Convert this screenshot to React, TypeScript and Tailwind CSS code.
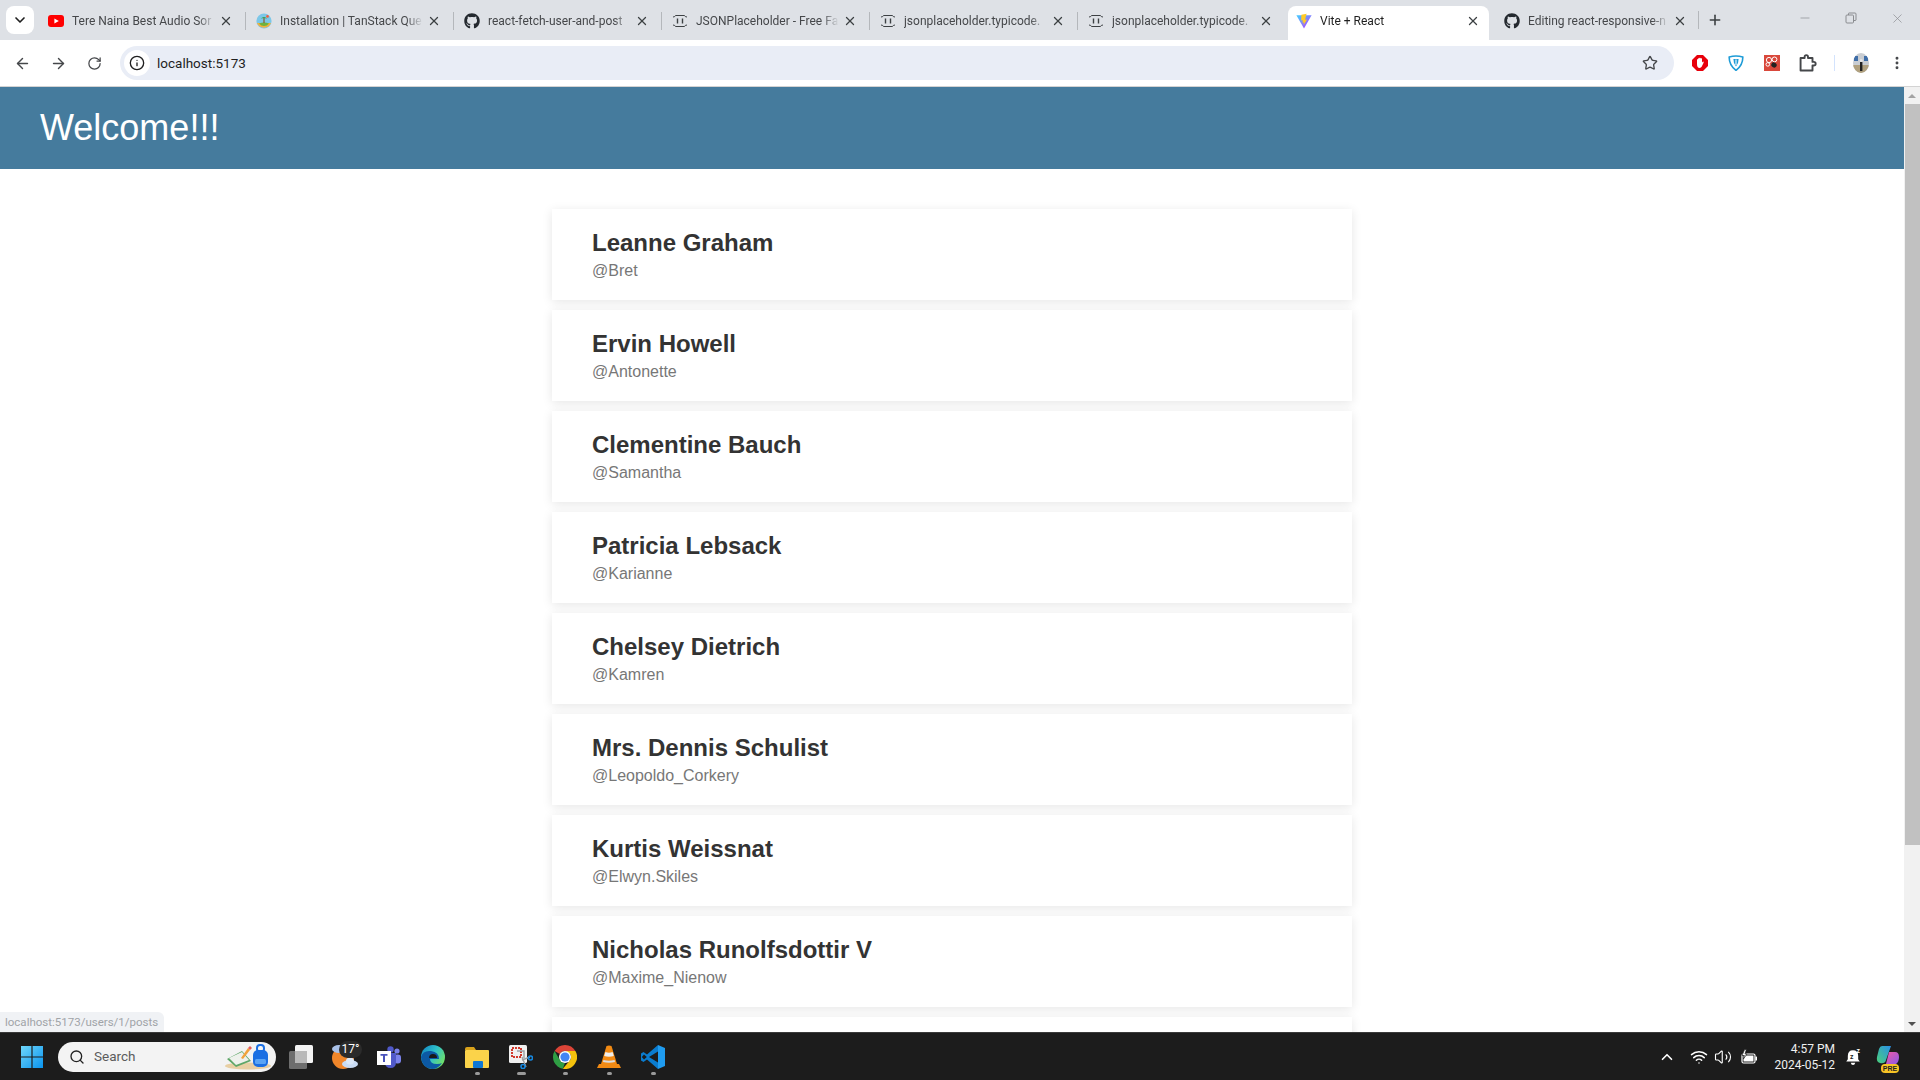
import React from 'react';
import {
  ArrowLeft,
  ArrowRight,
  ChevronDown,
  ChevronUp,
  Info,
  Minus,
  MoreVertical,
  Plus,
  RotateCw,
  Search,
  Star,
  Volume2,
  Wifi,
  X,
} from 'lucide-react';
import { FaGithub } from 'react-icons/fa';

const users = [
  { name: 'Leanne Graham', username: 'Bret' },
  { name: 'Ervin Howell', username: 'Antonette' },
  { name: 'Clementine Bauch', username: 'Samantha' },
  { name: 'Patricia Lebsack', username: 'Karianne' },
  { name: 'Chelsey Dietrich', username: 'Kamren' },
  { name: 'Mrs. Dennis Schulist', username: 'Leopoldo_Corkery' },
  { name: 'Kurtis Weissnat', username: 'Elwyn.Skiles' },
  { name: 'Nicholas Runolfsdottir V', username: 'Maxime_Nienow' },
  { name: 'Glenna Reichert', username: 'Delphine' },
  { name: 'Clementina DuBuque', username: 'Moriah.Stanton' },
];

const YoutubeFavicon = () => (
  <svg viewBox="0 0 16 16" className="w-4 h-4 shrink-0">
    <rect x="0" y="2" width="16" height="12" rx="3" fill="#ff0000" />
    <path d="M6.4 5.4 L10.8 8 L6.4 10.6 Z" fill="#fff" />
  </svg>
);

const IslandFavicon = () => (
  <svg viewBox="0 0 16 16" className="w-4 h-4 shrink-0">
    <circle cx="8" cy="8" r="7.6" fill="#7cc7e8" />
    <path d="M1 10 A7.6 7.6 0 0 0 15 10 Z" fill="#f4b13d" />
    <path d="M3 10.5 Q8 8.5 13 10.5 Q11 13 8 13 Q5 13 3 10.5Z" fill="#6db33f" />
    <path d="M8 10 L8 5" stroke="#8a5a2b" strokeWidth="1.2" />
    <path d="M4.8 5.6 Q8 2.2 11.2 5.6 Q8 4.4 4.8 5.6Z" fill="#2f9e44" />
    <circle cx="11.5" cy="3.4" r="1.3" fill="#f25c3b" />
  </svg>
);

const JsonFavicon = () => (
  <svg viewBox="0 0 16 16" className="w-4 h-4 shrink-0" fill="none" stroke="#3c4043" strokeWidth="1">
    <path d="M1 4 Q3 4 3.5 2.5 L12.5 2.5 Q13 4 15 4" />
    <path d="M1 12 Q3 12 3.5 13.5 L12.5 13.5 Q13 12 15 12" />
    <path d="M5.5 5.5 V10.5 M10.5 5.5 V10.5" strokeWidth="1.4" />
  </svg>
);

const ViteFavicon = () => (
  <svg viewBox="0 0 16 16" className="w-4 h-4 shrink-0">
    <defs>
      <linearGradient id="viteBody" x1="0" y1="0" x2="1" y2="1">
        <stop offset="0" stopColor="#41d1ff" />
        <stop offset="1" stopColor="#bd34fe" />
      </linearGradient>
    </defs>
    <path d="M0.4 2.2 L15.6 2.2 L8 15.4 Z" fill="url(#viteBody)" />
    <path d="M10.6 0.8 L5.4 1.8 L5.1 7.6 L6.9 7.2 L6.4 9.8 L7.9 9.4 L7.5 12.2 L11 6.4 L9.1 6.8 L9.6 4.4 Z" fill="#ffca28" />
  </svg>
);

type TabProps = {
  title: string;
  icon: React.ReactNode;
  variant?: 'normal' | 'active' | 'last';
  separator?: boolean;
};

const tabVariants = {
  normal: 'w-[205px] text-[#45474a] pr-3',
  active: 'w-[201px] bg-white rounded-t-lg text-[#1f1f1f] pr-[9px]',
  last: 'w-full text-[#45474a] pr-[11px]',
};

const Tab = ({ title, icon, variant = 'normal', separator }: TabProps) => (
  <div className={`h-[34px] shrink-0 flex items-center ${variant === 'last' ? 'w-[202px]' : 'w-[208px]'}`}>
    <div className={`h-full flex items-center pl-2 pb-1 ${tabVariants[variant]}`}>
      {icon}
      <span className="ml-2 mr-1 flex-1 min-w-0 whitespace-nowrap overflow-hidden text-xs [mask-image:linear-gradient(to_right,black_88%,transparent)]">
        {title}
      </span>
      <X className="w-3.5 h-3.5 shrink-0 text-[#3c4043]" strokeWidth={2.2} />
    </div>
    {separator && <div className="w-px h-[18px] mb-1 bg-[#b4b7bb]" />}
  </div>
);

const StopExtension = () => (
  <svg viewBox="0 0 16 16" className="w-4 h-4">
    <path d="M5 0 H11 L16 5 V11 L11 16 H5 L0 11 V5 Z" fill="#e8000b" />
    <path d="M5 9 V5 Q5 4 6 4 V7 V3.5 Q6.5 2.8 7.2 3.5 V7 V3 Q8 2.4 8.6 3 V7 V3.6 Q9.4 3 10 3.6 V7.5 L11 6.6 Q12 6.6 11.6 7.8 L9.8 11.6 Q9.2 13 7.6 13 Q5 13 5 9Z" fill="#fff" />
  </svg>
);

const ShieldExtension = () => (
  <svg viewBox="0 0 16 16" className="w-4 h-4" fill="none">
    <path d="M1.2 2 Q8 0 14.8 2 Q15 10 8 15.4 Q1 10 1.2 2Z" stroke="#1e9cd7" strokeWidth="1.6" fill="#fff" />
    <path d="M5.4 4 H10.6 Q10.8 8 8 11.4 Q5.2 8 5.4 4Z" fill="#1e9cd7" />
    <path d="M8 4.6 V10" stroke="#fff" strokeWidth="1.1" />
  </svg>
);

const BeeExtension = () => (
  <svg viewBox="0 0 16 16" className="w-4 h-4">
    <rect width="16" height="16" fill="#d9483b" />
    <circle cx="5" cy="5" r="2.6" fill="none" stroke="#fff" strokeWidth="1" />
    <circle cx="10.5" cy="4.4" r="2.4" fill="none" stroke="#fff" strokeWidth="1" />
    <circle cx="3.8" cy="9.4" r="1.8" fill="none" stroke="#fff" strokeWidth="1" />
    <ellipse cx="10" cy="10" rx="2.8" ry="2.4" fill="#222" transform="rotate(35 10 10)" />
  </svg>
);

const PuzzleExtension = () => (
  <svg viewBox="0 0 16 16" className="w-[18px] h-[18px]" fill="none" stroke="#45474a" strokeWidth="1.7" strokeLinejoin="round">
    <path d="M1.4 3.6 H5 V2.6 Q5 1 6.5 1 Q8 1 8 2.6 V3.6 H12 V7 H13 Q14.8 7 14.8 8.6 Q14.8 10.2 13 10.2 H12 V14.6 H1.4 Z" />
  </svg>
);

const Avatar = () => (
  <svg viewBox="0 0 16 20" className="w-4 h-5">
    <defs>
      <clipPath id="avatarClip">
        <ellipse cx="8" cy="10" rx="8" ry="10" />
      </clipPath>
    </defs>
    <g clipPath="url(#avatarClip)">
      <rect width="16" height="20" fill="#c9cdd2" />
      <rect y="12" width="16" height="8" fill="#b0a07e" />
      <rect x="1" y="3" width="4" height="5" fill="#3f6ea8" />
      <rect x="11" y="3" width="4" height="5" fill="#3f6ea8" />
      <rect x="7" y="9" width="2.4" height="9" fill="#222" />
      <circle cx="8.2" cy="7.5" r="1.5" fill="#e6e6e6" />
    </g>
  </svg>
);

const WindowsLogo = () => (
  <svg viewBox="0 0 24 24" className="w-6 h-6">
    <defs>
      <linearGradient id="winTile" x1="0" y1="0" x2="1" y2="1">
        <stop offset="0" stopColor="#6fd6fb" />
        <stop offset="1" stopColor="#0a94ef" />
      </linearGradient>
    </defs>
    <path d="M1 1 H11.4 V11.4 H1 Z M12.6 1 H23 V11.4 H12.6 Z M1 12.6 H11.4 V23 H1 Z M12.6 12.6 H23 V23 H12.6 Z" fill="url(#winTile)" />
  </svg>
);

const SearchArt = () => (
  <svg viewBox="0 0 50 26" className="w-[50px] h-[26px]">
    <ellipse cx="24" cy="22" rx="23" ry="3.4" fill="#e8cfa3" />
    <path d="M3 15 L18 7 L27 17 L12 23 Z" fill="#5ea668" />
    <path d="M5 14 L18 8 L25 16 L12 21 Z" fill="#eef1ec" />
    <path d="M17 14 L24 4 L26 6 L19 15 Z" fill="#f2a33c" />
    <path d="M24 4 L26 2 L28 4 L26 6 Z" fill="#e85d5d" />
    <rect x="29" y="6" width="15" height="17" rx="5" fill="#1b6fe3" />
    <rect x="33" y="1" width="7" height="7" rx="3" fill="none" stroke="#1b6fe3" strokeWidth="2" />
    <rect x="31" y="15" width="11" height="5" rx="1.5" fill="#5aa4f5" />
  </svg>
);

const TaskView = () => (
  <svg viewBox="0 0 24 24" className="w-6 h-6">
    <rect x="0" y="6" width="18" height="18" rx="1.5" fill="#6e6e6e" />
    <rect x="6" y="0" width="18" height="18" rx="1.5" fill="#f3f3f3" />
    <rect x="6" y="6" width="12" height="12" fill="#b9b9b9" />
  </svg>
);

const WeatherIcon = () => (
  <div className="relative w-[30px] h-7">
    <svg viewBox="0 0 30 28" className="w-[30px] h-7">
      <circle cx="13" cy="15" r="11" fill="#f0862a" />
      <ellipse cx="9" cy="6" rx="7" ry="4" fill="#a9c1e8" />
      <ellipse cx="20" cy="21" rx="8" ry="4" fill="#c9dcf5" />
      <ellipse cx="20" cy="18" rx="4" ry="3.6" fill="#dbe8f8" />
    </svg>
    <div className="absolute -top-0.5 left-[9px] w-[23px] h-[17px] rounded-full bg-[#2b2b2b] text-white text-xs leading-[17px] text-center">
      17°
    </div>
  </div>
);

const TeamsIcon = () => (
  <svg viewBox="0 0 24 24" className="w-6 h-6">
    <circle cx="20" cy="6" r="2.6" fill="#7b83eb" />
    <circle cx="13.5" cy="4.4" r="3.2" fill="#5059c9" />
    <rect x="17" y="9.5" width="7" height="9" rx="3" fill="#7b83eb" />
    <path d="M8 8 H19 V17 Q19 23 13.5 23 Q8 23 8 17Z" fill="#5059c9" />
    <rect x="0" y="6" width="14" height="14" fill="#fff" />
    <path d="M3.5 9 H10.5 V10.8 H8 V17 H6 V10.8 H3.5 Z" fill="#4b53bc" />
  </svg>
);

const EdgeIcon = () => (
  <svg viewBox="0 0 24 24" className="w-6 h-6">
    <defs>
      <linearGradient id="edgeTop" x1="0" y1="0" x2="1" y2="0.6">
        <stop offset="0" stopColor="#0f7fc4" />
        <stop offset="0.55" stopColor="#2fc2c9" />
        <stop offset="1" stopColor="#6fe06a" />
      </linearGradient>
    </defs>
    <circle cx="12" cy="12" r="12" fill="url(#edgeTop)" />
    <path d="M0 12 Q2 5 10 6 Q18 7 18 14 H9 Q9 19 16 19 Q19 19 21 18 Q17 24 11 24 Q1 23 0 12Z" fill="#0c59a4" />
    <path d="M8 13 Q8 9 12 9 Q16 9 16 13 Z" fill="#1a1a1a" />
  </svg>
);

const FolderIcon = () => (
  <svg viewBox="0 0 24 24" className="w-6 h-6">
    <path d="M0 4 Q0 2 2 2 H9 L11 5 H0 Z" fill="#d9a21b" />
    <rect x="0" y="5" width="24" height="18" rx="1" fill="#fbd34a" />
    <rect x="8" y="16" width="10" height="7" rx="1" fill="#0f78d4" />
  </svg>
);

const SnipIcon = () => (
  <svg viewBox="0 0 24 24" className="w-6 h-6">
    <rect x="0" y="0" width="18" height="18" rx="1.5" fill="#f0f0f0" />
    <rect x="3" y="3" width="9" height="9" fill="none" stroke="#d1392c" strokeWidth="2" strokeDasharray="2 1" />
    <path d="M8 6 H15 V13 M13 12 L17 22 M21 12 L13 15" fill="none" stroke="#9aa0a6" strokeWidth="1.4" />
    <circle cx="21.5" cy="13" r="2" fill="none" stroke="#1688e0" strokeWidth="1.6" />
    <circle cx="14" cy="21.5" r="2" fill="none" stroke="#1688e0" strokeWidth="1.6" />
  </svg>
);

const ChromeIcon = () => (
  <svg viewBox="0 0 24 24" className="w-6 h-6">
    <path d="M12 0 A12 12 0 0 1 22.4 6 H12 A6 6 0 0 0 6.8 9 L1.6 6 A12 12 0 0 1 12 0Z" fill="#db4437" />
    <path d="M1.6 6 L6.8 15 A6 6 0 0 0 12 18 L9.8 23.8 A12 12 0 0 1 1.6 6Z" fill="#2f9e44" />
    <path d="M22.4 6 A12 12 0 0 1 9.8 23.8 L17.2 15 A6 6 0 0 0 17.2 9 L12 6Z" fill="#f4c20d" />
    <circle cx="12" cy="12" r="6" fill="#fff" />
    <circle cx="12" cy="12" r="4.6" fill="#4285f4" />
  </svg>
);

const VlcIcon = () => (
  <svg viewBox="0 0 24 24" className="w-6 h-6">
    <path d="M9.5 1 Q12 0 14.5 1 L20 19 H4 Z" fill="#f28a13" />
    <path d="M8.4 7 Q12 8.4 15.6 7 L16.8 11 Q12 12.6 7.2 11 Z" fill="#eee" />
    <path d="M6.4 15 Q12 16.6 17.6 15 L18 17 Q12 18.6 6 17Z" fill="#ddd" />
    <path d="M2 19 H22 L24 23 H0 Z" fill="#f28a13" />
  </svg>
);

const VsCodeIcon = () => (
  <svg viewBox="0 0 24 24" className="w-6 h-6">
    <path d="M17 0 L24 3 V21 L17 24 Z" fill="#1f9cf0" />
    <path d="M17 0 V6.5 L8 12 L17 17.5 V24 L6 14.5 L2.5 17 L0 15.5 V8.5 L2.5 7 L6 9.5 Z" fill="#0a7ccf" />
    <path d="M3 9.6 L0.8 12 L3 14.4 L5.8 12 Z" fill="#1a1a1a" />
  </svg>
);

const BatteryIcon = () => (
  <svg viewBox="0 0 16 16" className="w-4 h-4">
    <rect x="1" y="5" width="13" height="9" rx="1.5" fill="none" stroke="#fff" strokeWidth="1.2" />
    <rect x="14.5" y="7.5" width="1.5" height="4" rx="0.5" fill="#fff" />
    <rect x="2.5" y="6.5" width="10" height="6" fill="#fff" />
    <path d="M3.6 0.5 L1 6.5 H3.4 L2.4 10 L6 5 H4 L5.4 0.5 Z" fill="#fff" stroke="#1c1c1c" strokeWidth="0.7" />
  </svg>
);

const BellIcon = () => (
  <svg viewBox="0 0 16 16" className="w-[18px] h-[18px]" fill="#fff">
    <path d="M8 2 Q3.4 2 3.4 7 V10 L2 12 H14 L12.6 10 V7 Q12.6 2 8 2Z" />
    <path d="M6 13 H10 Q9.6 15 8 15 Q6.4 15 6 13Z" />
    <text x="5.4" y="9.4" fontSize="6" fontWeight="700" fill="#1c1c1c">z</text>
    <text x="11" y="4.6" fontSize="6" fontWeight="700" fill="#fff">z</text>
  </svg>
);

const CopilotIcon = () => (
  <div className="relative w-6 h-6">
    <svg viewBox="0 0 24 24" className="w-6 h-6">
      <defs>
        <linearGradient id="copA" x1="0" y1="1" x2="1" y2="0">
          <stop offset="0" stopColor="#4ad07a" />
          <stop offset="1" stopColor="#2a8fe8" />
        </linearGradient>
        <linearGradient id="copB" x1="0" y1="0" x2="1" y2="1">
          <stop offset="0" stopColor="#f05aa6" />
          <stop offset="1" stopColor="#8a58e6" />
        </linearGradient>
      </defs>
      <path d="M6 1 H15 L10 15 Q9 19 4 18 Q0 17 1 12 L3 4 Q4 1 6 1Z" fill="url(#copA)" />
      <path d="M13 7 H19 Q23 7 23 12 Q23 17 20 19 H10 Z" fill="url(#copB)" />
    </svg>
    <span className="absolute left-[5px] -bottom-1 w-[18px] h-[9px] rounded-sm bg-[#f7c325] text-[7px] leading-[9px] font-bold text-center text-[#222] [font-family:'Liberation_Sans',sans-serif]">
      PRE
    </span>
  </div>
);

const TaskItem = ({ children, dot }: { children: React.ReactNode; dot?: 'wide' | 'small' }) => (
  <div className="relative w-11 h-full flex items-center justify-center">
    {children}
    {dot && (
      <div
        className={`absolute bottom-[5px] h-[3px] rounded-full bg-[#9a9a9a] ${dot === 'wide' ? 'w-[9px]' : 'w-[5px]'}`}
      />
    )}
  </div>
);

const UserCard = ({ name, username }: { name: string; username: string }) => (
  <div className="w-[800px] shrink-0 mb-2.5 px-10 py-5 bg-white shadow-[0_2px_10px_rgba(0,0,0,0.1)]">
    <h2 className="text-2xl leading-[28px] font-bold text-[#333] mb-[5px]">{name}</h2>
    <p className="text-base leading-[18px] text-[#777]">@{username}</p>
  </div>
);

export default function App() {
  return (
    <div className="h-screen flex flex-col overflow-hidden bg-white [font-family:Roboto,sans-serif]">
      {/* tab strip */}
      <div className="h-10 shrink-0 bg-[#dee1e6] flex items-end">
        <div className="self-start mt-1.5 ml-1.5 mr-1.5 w-7 h-7 rounded-lg bg-white flex items-center justify-center">
          <ChevronDown className="w-4 h-4 text-[#1f1f1f]" strokeWidth={2.5} />
        </div>
        <Tab title="Tere Naina Best Audio Sor" icon={<YoutubeFavicon />} separator />
        <Tab title="Installation | TanStack Que" icon={<IslandFavicon />} separator />
        <Tab title="react-fetch-user-and-post" icon={<FaGithub className="w-4 h-4 shrink-0 text-[#24292f]" />} separator />
        <Tab title="JSONPlaceholder - Free Fa" icon={<JsonFavicon />} separator />
        <Tab title="jsonplaceholder.typicode." icon={<JsonFavicon />} separator />
        <Tab title="jsonplaceholder.typicode." icon={<JsonFavicon />} />
        <Tab title="Vite + React" icon={<ViteFavicon />} variant="active" />
        <Tab title="Editing react-responsive-n" icon={<FaGithub className="w-4 h-4 shrink-0 text-[#24292f]" />} variant="last" />
        <div className="self-start mt-[11px] w-px h-[18px] bg-[#b4b7bb]" />
        <div className="self-start mt-3 ml-2 w-4 h-4 flex items-center justify-center">
          <Plus className="w-4 h-4 text-[#3c4043]" strokeWidth={2.4} />
        </div>
        <div className="self-start ml-auto h-9 flex items-center text-[#8a8c90]">
          <div className="w-[46px] flex justify-center">
            <Minus className="w-3.5 h-3.5" strokeWidth={1.2} />
          </div>
          <div className="w-[46px] flex justify-center">
            <svg viewBox="0 0 12 12" className="w-3 h-3" fill="none" stroke="currentColor" strokeWidth="1">
              <rect x="1" y="3" width="7.5" height="8" rx="1" />
              <path d="M3.5 3 V1.5 Q3.5 1 4 1 H10 Q11 1 11 2 V8 Q11 8.5 10 8.5 H8.5" />
            </svg>
          </div>
          <div className="w-[46px] flex justify-center">
            <X className="w-[15px] h-[15px]" strokeWidth={1.1} />
          </div>
        </div>
      </div>

      {/* toolbar */}
      <div className="h-[47px] shrink-0 bg-white rounded-t-lg border-b border-[#d3d3d3] flex items-center pl-[4px]">
        <div className="w-9 flex justify-center">
          <ArrowLeft className="w-[17px] h-[17px] text-[#45474a]" strokeWidth={2} />
        </div>
        <div className="w-9 flex justify-center">
          <ArrowRight className="w-[17px] h-[17px] text-[#45474a]" strokeWidth={2} />
        </div>
        <div className="w-9 flex justify-center">
          <RotateCw className="w-[15px] h-[15px] text-[#45474a]" strokeWidth={2} />
        </div>
        <div className="ml-2 w-[1554px] h-[34px] rounded-full bg-[#e9edf6] flex items-center pl-1 pr-4">
          <div className="w-[26px] h-[26px] rounded-full bg-white flex items-center justify-center">
            <Info className="w-4 h-4 text-[#1f1f1f]" strokeWidth={2} />
          </div>
          <span className="ml-[7px] text-[13.5px] text-[#1f1f1f] flex-1">localhost:5173</span>
          <Star className="w-4 h-4 text-[#45474a]" strokeWidth={2} />
        </div>
        <div className="ml-2 flex items-center">
          <div className="w-9 flex justify-center"><StopExtension /></div>
          <div className="w-9 flex justify-center"><ShieldExtension /></div>
          <div className="w-9 flex justify-center"><BeeExtension /></div>
          <div className="w-9 flex justify-center"><PuzzleExtension /></div>
          <div className="ml-2 w-px h-4 bg-[#d3e3fd]" />
          <div className="ml-[18px] flex justify-center"><Avatar /></div>
          <div className="ml-5">
            <MoreVertical className="w-4 h-4 text-[#45474a]" strokeWidth={2.4} />
          </div>
        </div>
      </div>

      {/* page */}
      <div className="flex-1 min-h-0 flex relative [font-family:'Liberation_Sans',sans-serif]">
        <div className="flex-1 min-w-0 overflow-hidden">
          <header className="h-[82px] bg-[#457b9d] px-10 flex items-center">
            <h1 className="text-4xl text-white font-normal">Welcome!!!</h1>
          </header>
          <main className="pt-10 flex flex-col items-center">
            {users.map((user) => (
              <UserCard key={user.username} name={user.name} username={user.username} />
            ))}
          </main>
        </div>
        <div className="w-4 shrink-0 bg-[#f1f1f1] flex flex-col items-center">
          <div className="h-[17px] flex items-center justify-center">
            <div className="w-0 h-0 border-x-4 border-x-transparent border-b-[4px] border-b-[#a3a3a3]" />
          </div>
          <div className="w-[15px] h-[741px] bg-[#c1c1c1]" />
          <div className="mt-auto h-[17px] flex items-center justify-center">
            <div className="w-0 h-0 border-x-4 border-x-transparent border-t-[4px] border-t-[#505050]" />
          </div>
        </div>
        <div className="absolute left-0 bottom-0 h-5 w-[164px] pl-[5px] rounded-tr-md bg-[#f0f2f5] text-[#a0a4a8] text-[11.5px] leading-5 [font-family:Roboto,sans-serif]">
          localhost:5173/users/1/posts
        </div>
      </div>

      {/* taskbar */}
      <div className="h-12 shrink-0 bg-[#1c1c1c] border-t border-[#3a3a3a] flex items-center text-white">
        <div className="ml-5"><WindowsLogo /></div>
        <div className="ml-[14px] w-[218px] h-[30px] rounded-full bg-[#f3f3f3] flex items-center pl-[11px] pr-0.5">
          <Search className="w-4 h-4 text-[#222]" strokeWidth={2} />
          <span className="ml-[9px] flex-1 text-[13.5px] text-[#5c5c5c]">Search</span>
          <SearchArt />
        </div>
        <div className="ml-[3px] h-full flex">
          <TaskItem><TaskView /></TaskItem>
          <TaskItem><WeatherIcon /></TaskItem>
          <TaskItem><TeamsIcon /></TaskItem>
          <TaskItem><EdgeIcon /></TaskItem>
          <TaskItem dot="small"><FolderIcon /></TaskItem>
          <TaskItem dot="wide"><SnipIcon /></TaskItem>
          <TaskItem dot="small"><ChromeIcon /></TaskItem>
          <TaskItem dot="small"><VlcIcon /></TaskItem>
          <TaskItem dot="small"><VsCodeIcon /></TaskItem>
        </div>
        <div className="ml-auto flex items-center">
          <ChevronUp className="w-[18px] h-[18px] mr-[14px]" strokeWidth={2.2} />
          <Wifi className="w-[18px] h-[18px] mr-1.5" strokeWidth={2} />
          <Volume2 className="w-[18px] h-[18px] mr-[9px]" strokeWidth={1.5} />
          <BatteryIcon />
          <div className="ml-[17px] text-xs leading-4 text-right text-[#f0f0f0] mr-[9px]">
            <div>4:57 PM</div>
            <div>2024-05-12</div>
          </div>
          <BellIcon />
          <div className="ml-3.5 mr-[20px]"><CopilotIcon /></div>
        </div>
      </div>
    </div>
  );
}
